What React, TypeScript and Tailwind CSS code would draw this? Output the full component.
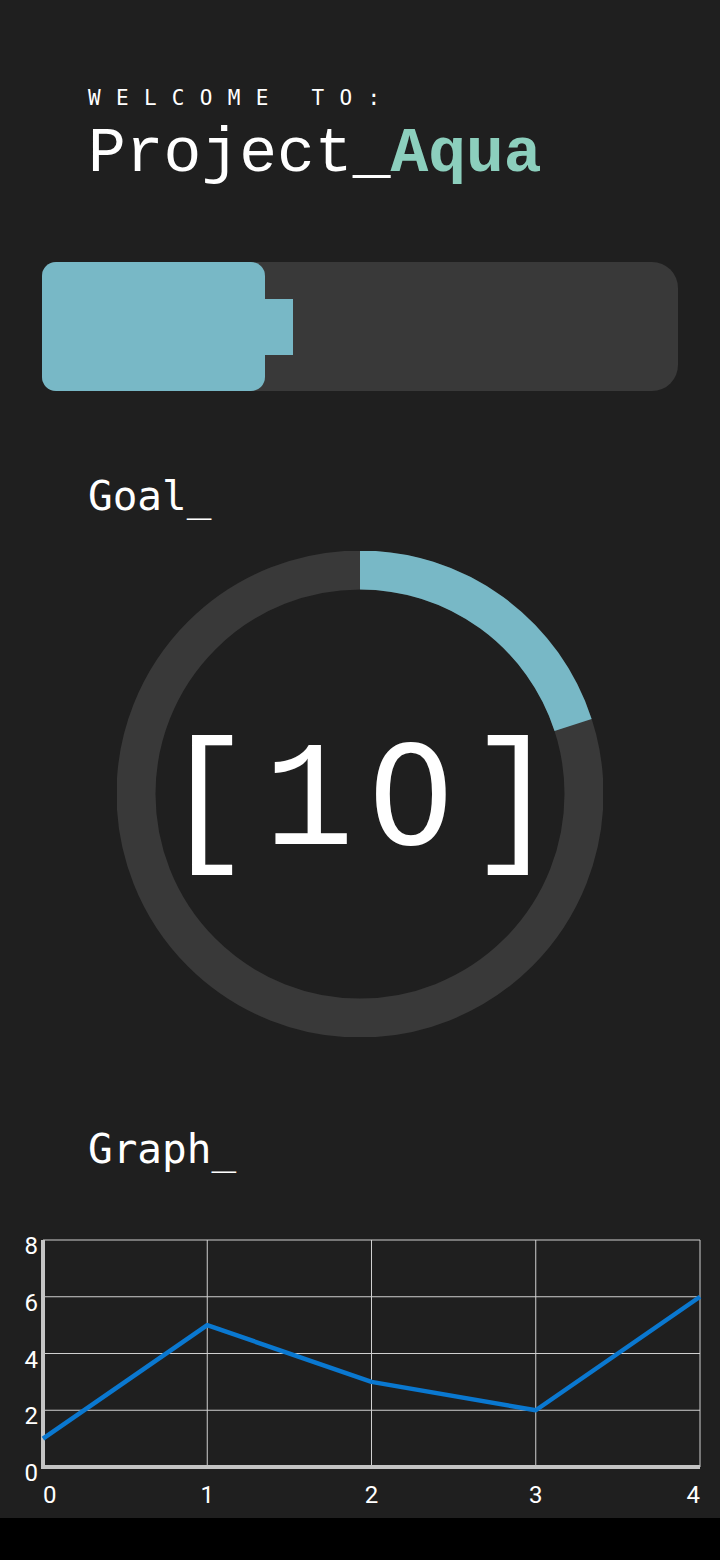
import React from 'react';

const mono = { fontFamily: '"DejaVu Sans Mono", monospace' };
const courier = { fontFamily: '"Courier New", "Nimbus Mono PS", FreeMono, "Liberation Mono", monospace' };
const ringFont = { fontFamily: '"Liberation Mono", monospace' };
const zeroFont = { fontFamily: '"DejaVu Sans", sans-serif' };

const data = [1, 5, 3, 2, 6];

function GoalRing({ progress }: { progress: number }) {
  const r = 224;
  const c = 2 * Math.PI * r;
  return (
    <div className="relative w-[486px] h-[486px]">
      <svg width="486" height="486" viewBox="0 0 486 486">
        <circle cx="243" cy="243" r={r} fill="none" stroke="#393939" strokeWidth="39" />
        <circle
          cx="243"
          cy="243"
          r={r}
          fill="none"
          stroke="#78b8c6"
          strokeWidth="39"
          strokeDasharray={`${c * progress} ${c}`}
          transform="rotate(-90 243 243)"
        />
      </svg>
      <div className="absolute inset-0 flex items-center justify-center pt-[18px]">
        <div className="text-white text-[150px] leading-none whitespace-nowrap" style={ringFont}>
          <span className="inline-block w-[102px] text-center">[</span>
          <span className="inline-block w-[102px] text-center">1</span>
          <span className="inline-block w-[102px] text-center text-[138px]" style={zeroFont}>0</span>
          <span className="inline-block w-[102px] text-center">]</span>
        </div>
      </div>
    </div>
  );
}

function Graph() {
  const x0 = 43;
  const x1 = 700;
  const y0 = 247;
  const y8 = 20;
  const px = (i: number) => x0 + ((x1 - x0) / 4) * i;
  const py = (v: number) => y0 - ((y0 - y8) / 8) * v;
  const pts = data.map((v, i) => `${px(i)},${py(v)}`).join(' ');
  return (
    <svg width="720" height="298" viewBox="0 0 720 298" style={{ fontFamily: 'Roboto, sans-serif' }}>
      {[2, 4, 6, 8].map((v) => (
        <line key={`h${v}`} x1={x0} x2={x1} y1={py(v)} y2={py(v)} stroke="#d0d0d0" strokeWidth="1" />
      ))}
      {[1, 2, 3, 4].map((i) => (
        <line key={`v${i}`} x1={px(i)} x2={px(i)} y1={y8} y2={y0} stroke="#d0d0d0" strokeWidth="1" />
      ))}
      <line x1={x0} x2={x0} y1={y8} y2={y0 + 2} stroke="#c4c4c4" strokeWidth="4" />
      <line x1={x0} x2={x1} y1={y0} y2={y0} stroke="#c4c4c4" strokeWidth="4" />
      <polyline points={pts} fill="none" stroke="#0a78d0" strokeWidth="4.5" strokeLinejoin="round" />
      {[0, 2, 4, 6, 8].map((v) => (
        <text key={`yl${v}`} x="38" y={py(v) + 14} fill="#ffffff" fontSize="24" textAnchor="end">
          {v}
        </text>
      ))}
      {[0, 1, 2, 3, 4].map((i) => (
        <text
          key={`xl${i}`}
          x={i === 0 ? 43 : i === 4 ? 700 : px(i)}
          y="283"
          fill="#ffffff"
          fontSize="24"
          textAnchor={i === 0 ? 'start' : i === 4 ? 'end' : 'middle'}
        >
          {i}
        </text>
      ))}
    </svg>
  );
}

export default function App() {
  return (
    <div className="w-[720px] h-[1560px] flex flex-col bg-black overflow-hidden">
      <div className="h-[1518px] bg-[#1f1f1f] flex flex-col">
        <div className="pl-[88px] pt-[84px]">
          <div className="text-white text-[21px] leading-[28px] tracking-[15.3px]" style={mono}>
            WELCOME TO:
          </div>
          <div className="text-white text-[63px] leading-[70px] mt-[8px]" style={courier}>
            Project_<span className="font-bold text-[#8ccfbd]">Aqua</span>
          </div>
        </div>

        <div className="mt-[72px] ml-[42px] w-[636px] h-[131px] bg-[#393939] rounded-r-[26px] rounded-l-[14px] flex items-center">
          <div className="w-[223px] h-full bg-[#78b8c6] rounded-[14px]" />
          <div className="w-[28px] h-[56px] bg-[#78b8c6]" />
        </div>

        <div className="pl-[88px] mt-[79px] text-white text-[41px] leading-[52px]" style={mono}>
          Goal_
        </div>

        <div className="flex justify-center mt-[29px]">
          <GoalRing progress={0.2} />
        </div>

        <div className="pl-[88px] mt-[86px] text-white text-[41px] leading-[52px]" style={mono}>
          Graph_
        </div>

        <div className="mt-[45px]">
          <Graph />
        </div>
      </div>
    </div>
  );
}
